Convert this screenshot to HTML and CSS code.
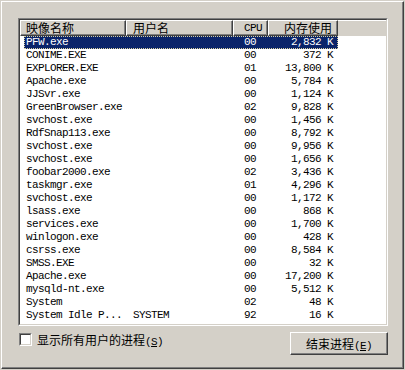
FILE: index.html
```html
<!doctype html>
<html>
<head>
    <title>Processes</title>
    <link rel="stylesheet" href="styles.css">
</head>
<body>
<div class="panel">
    <div class="listbox">
        <div class="listinner">
            <div class="head">
                <div class="hcell c-name"><span class="cn">映像名称</span></div>
                <div class="hcell c-user"><span class="cn">用户名</span></div>
                <div class="hcell c-cpu">CPU</div>
                <div class="hcell c-mem"><span class="cn">内存使用</span></div>
                <div class="hfill"></div>
            </div>
            <div class="rows">
                <div class="row sel"><span>PFW.exe</span><span></span><span>00</span><span>2,832 K</span></div>
                <div class="row"><span>CONIME.EXE</span><span></span><span>00</span><span>372 K</span></div>
                <div class="row"><span>EXPLORER.EXE</span><span></span><span>01</span><span>13,800 K</span></div>
                <div class="row"><span>Apache.exe</span><span></span><span>00</span><span>5,784 K</span></div>
                <div class="row"><span>JJSvr.exe</span><span></span><span>00</span><span>1,124 K</span></div>
                <div class="row"><span>GreenBrowser.exe</span><span></span><span>02</span><span>9,828 K</span></div>
                <div class="row"><span>svchost.exe</span><span></span><span>00</span><span>1,456 K</span></div>
                <div class="row"><span>RdfSnap113.exe</span><span></span><span>00</span><span>8,792 K</span></div>
                <div class="row"><span>svchost.exe</span><span></span><span>00</span><span>9,956 K</span></div>
                <div class="row"><span>svchost.exe</span><span></span><span>00</span><span>1,656 K</span></div>
                <div class="row"><span>foobar2000.exe</span><span></span><span>02</span><span>3,436 K</span></div>
                <div class="row"><span>taskmgr.exe</span><span></span><span>01</span><span>4,296 K</span></div>
                <div class="row"><span>svchost.exe</span><span></span><span>00</span><span>1,172 K</span></div>
                <div class="row"><span>lsass.exe</span><span></span><span>00</span><span>868 K</span></div>
                <div class="row"><span>services.exe</span><span></span><span>00</span><span>1,700 K</span></div>
                <div class="row"><span>winlogon.exe</span><span></span><span>00</span><span>428 K</span></div>
                <div class="row"><span>csrss.exe</span><span></span><span>00</span><span>8,584 K</span></div>
                <div class="row"><span>SMSS.EXE</span><span></span><span>00</span><span>32 K</span></div>
                <div class="row"><span>Apache.exe</span><span></span><span>00</span><span>17,200 K</span></div>
                <div class="row"><span>mysqld-nt.exe</span><span></span><span>00</span><span>5,512 K</span></div>
                <div class="row"><span>System</span><span></span><span>02</span><span>48 K</span></div>
                <div class="row"><span>System Idle P...</span><span>SYSTEM</span><span>92</span><span>16 K</span></div>
            </div>
        </div>
    </div>

    <div class="foot">
        <label class="showall">
            <span class="check"><span class="check-in"></span></span>
            <span class="label"><span class="cn">显示所有用户的进程</span>(<u>S</u>)</span>
        </label>
        <div class="btn"><span class="label"><span class="cn">结束进程</span>(<u>E</u>)</span></div>
    </div>
</div>
</body>
</html>
```

FILE: styles.css
```css
body {
    margin: 0;
    background: #d4d0c8;
    color: #000;
    font-family: "Liberation Mono", "Noto Sans CJK SC", monospace;
    font-size: 11px;
    letter-spacing: -0.6px;
}

.cn {
    font-family: "Noto Sans CJK SC", sans-serif;
    font-size: 12px;
    letter-spacing: 0;
}

.label {
    white-space: nowrap;
}

.panel {
    margin: 1px 0 0 1px;
    width: 403px;
    height: 368px;
    box-sizing: border-box;
    border-top: 1px solid #fff;
    border-left: 1px solid #fff;
    border-right: 1px solid #404040;
    border-bottom: 1px solid #404040;
    box-shadow: inset -1px -1px #808080;
    padding: 16px 15px 0 16px;
    display: flex;
    flex-direction: column;
}

/* sunken list view */
.listbox {
    height: 308px;
    box-sizing: border-box;
    border: 1px solid;
    border-color: #808080 #fff #fff #808080;
}
.listinner {
    height: 100%;
    box-sizing: border-box;
    border: 1px solid;
    border-color: #404040 #d4d0c8 #d4d0c8 #404040;
    background: #fff;
}

.head {
    display: flex;
    height: 16px;
    background: #d4d0c8;
}
.hcell {
    box-sizing: border-box;
    height: 16px;
    border-top: 1px solid #fff;
    border-left: 1px solid #fff;
    border-right: 1px solid #404040;
    border-bottom: 1px solid #404040;
    box-shadow: inset -1px -1px #808080;
    line-height: 14px;
    white-space: nowrap;
    overflow: hidden;
}
.c-name { width: 106px; padding-left: 5px; }
.c-user { width: 107px; padding-left: 6px; }
.c-cpu  { width: 35px;  padding-left: 10px; }
.c-mem  { width: 70px;  text-align: right; padding-right: 5px; }
.hfill {
    flex: 1;
    border-top: 1px solid #fff;
}

.row {
    display: grid;
    grid-template-columns: 102px 107px 35px 70px;
    width: 314px;
    height: 13px;
    line-height: 13px;
    margin-left: 4px;
    white-space: pre;
}
.row span:nth-child(1) { padding-left: 2px; }
.row span:nth-child(2) { padding-left: 7px; }
.row span:nth-child(3) { padding-left: 11px; }
.row span:nth-child(4) { text-align: right; padding-right: 5px; }
.row.sel {
    background: #0a246a;
    color: #fff;
    outline: 1px dotted #d8d0a0;
    outline-offset: -1px;
}

/* bottom bar */
.foot {
    display: flex;
    justify-content: space-between;
    align-items: flex-start;
    margin-top: 6px;
}
.showall {
    display: flex;
    align-items: center;
    gap: 5px;
    margin-top: 1px;
    margin-left: 1px;
    height: 13px;
}
.check {
    width: 13px;
    height: 13px;
    box-sizing: border-box;
    border: 1px solid;
    border-color: #808080 #fff #fff #808080;
}
.check-in {
    display: block;
    height: 100%;
    box-sizing: border-box;
    border: 1px solid;
    border-color: #404040 #d4d0c8 #d4d0c8 #404040;
    background: #fff;
}

.btn {
    width: 98px;
    height: 23px;
    box-sizing: border-box;
    border: 1px solid;
    border-color: #fff #404040 #404040 #fff;
    box-shadow: inset -1px -1px #808080;
    background: #d4d0c8;
    display: flex;
    align-items: center;
    justify-content: center;
}
```
